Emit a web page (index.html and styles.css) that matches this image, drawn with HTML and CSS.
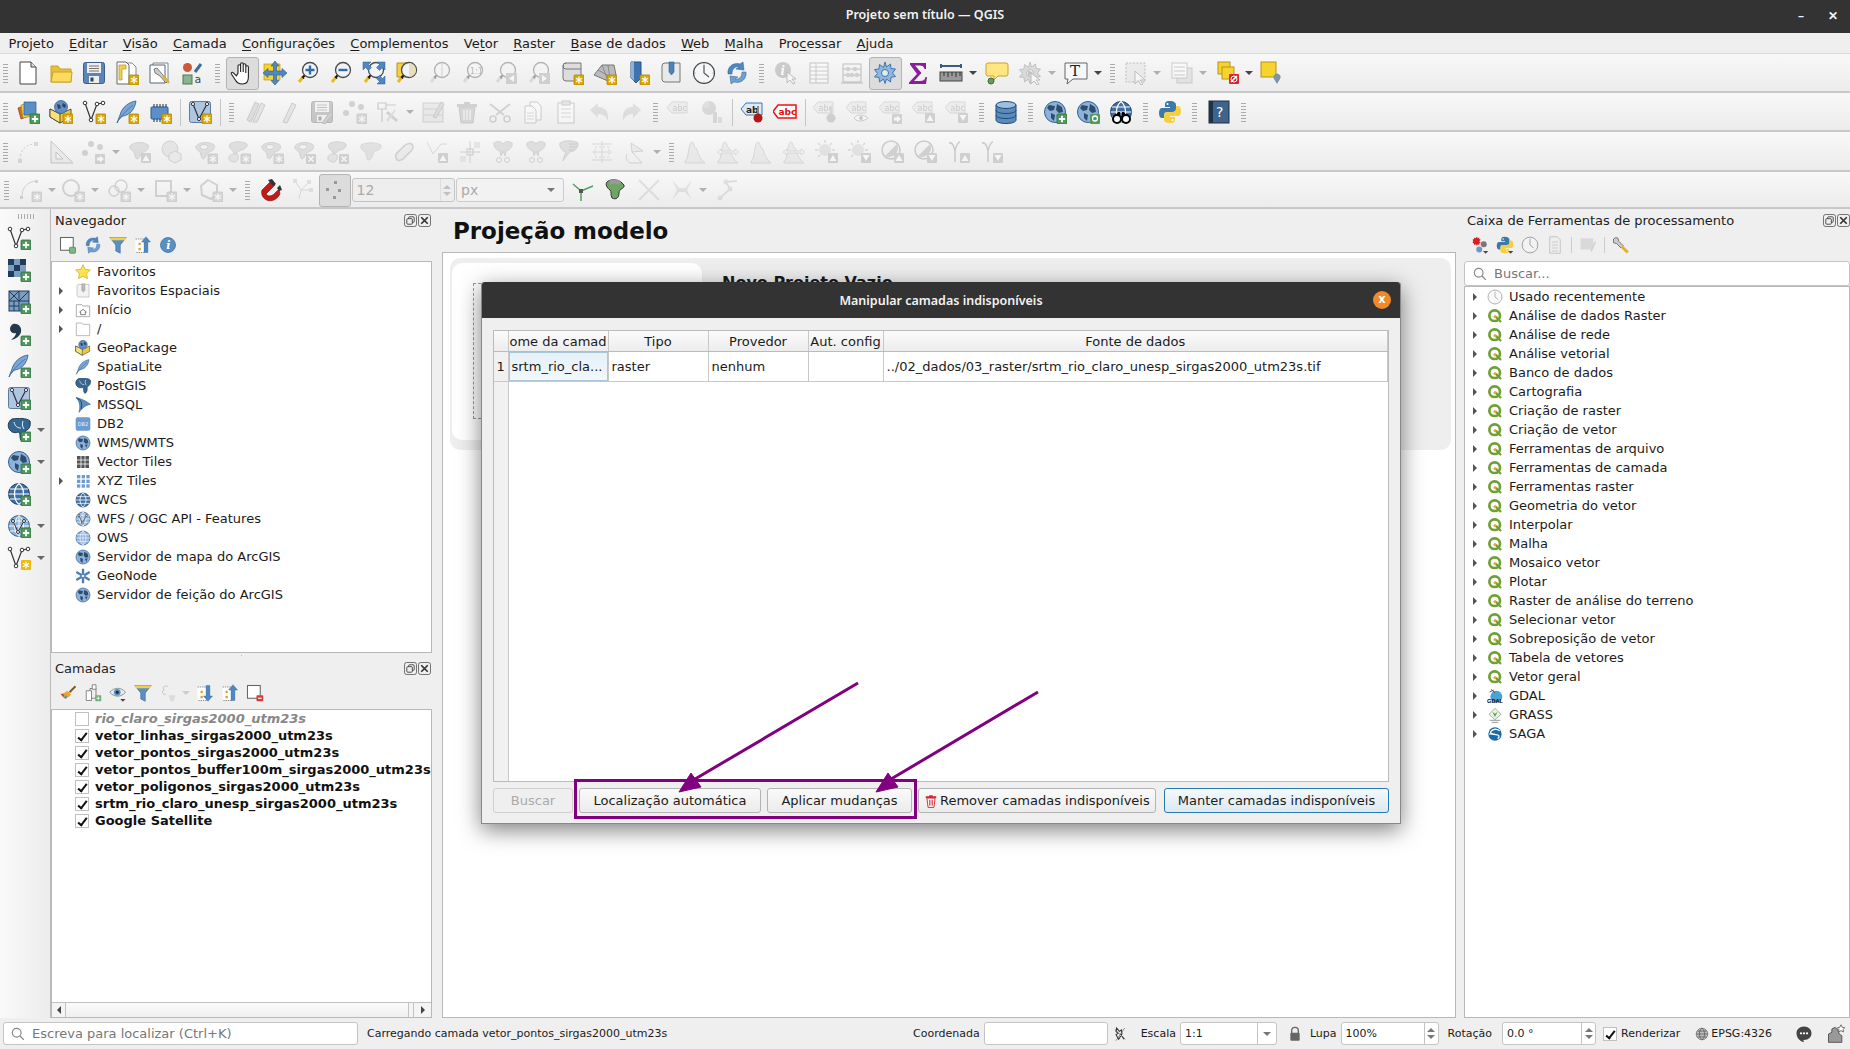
FILE: index.html
```html
<!DOCTYPE html>
<html lang="pt">
<head>
    <meta charset="UTF-8">
    <title>Projeto sem título — QGIS</title>
    <link rel="stylesheet" href="styles.css">
</head>
<body>

<!-- icon library -->
<svg class="defs" xmlns="http://www.w3.org/2000/svg">
    <symbol id="bstar" viewBox="0 0 24 24"><rect x="14" y="14" width="10" height="10" rx="1" fill="#dba90a" stroke="#a98300" stroke-width=".8"/><path d="M19 15.5v7M16 17.2l6 3.6M22 17.2l-6 3.6" stroke="#fff" stroke-width="1.3" fill="none"/></symbol>
    <symbol id="bplus" viewBox="0 0 24 24"><rect x="14" y="14" width="10" height="10" rx="1" fill="#4f9a5c" stroke="#2e6b3a" stroke-width=".8"/><path d="M19 15.8v6.4M15.8 19h6.4" stroke="#fff" stroke-width="1.8" fill="none"/></symbol>
    <symbol id="bx" viewBox="0 0 24 24"><rect x="13" y="14" width="10" height="10" rx="1" fill="#999"/><path d="M15.5 16.5l5 5M20.5 16.5l-5 5" stroke="#fff" stroke-width="1.6"/></symbol>
    <symbol id="barrow" viewBox="0 0 24 24"><rect x="13" y="14" width="10" height="10" rx="1" fill="#999"/><path d="M15 17.5h3v-2l4 3.5-4 3.5v-2h-3z" fill="#fff"/></symbol>
    <symbol id="bup" viewBox="0 0 24 24"><rect x="13" y="13" width="10" height="10" rx="1" fill="#999"/><path d="M18 15l3.5 6h-7z" fill="#fff"/></symbol>
    <symbol id="bdown" viewBox="0 0 24 24"><rect x="13" y="13" width="10" height="10" rx="1" fill="#999"/><path d="M18 21l3.5-6h-7z" fill="#fff"/></symbol>

    <symbol id="new" viewBox="0 0 24 24"><path d="M4 1h11l5 5v17H4z" fill="#fff" stroke="#444"/><path d="M15 1v5h5" fill="#ddd" stroke="#444"/></symbol>
    <symbol id="open" viewBox="0 0 24 24"><path d="M2 21V5h7l2 3h11v13z" fill="#e9bf3a" stroke="#c9a227"/><path d="M2 21l2-10h19l-1 10z" fill="#fbdb5e" stroke="#c9a227"/></symbol>
    <symbol id="save" viewBox="0 0 24 24"><rect x="1.5" y="1.5" width="21" height="21" rx="2" fill="#5b85b8" stroke="#3a5f8a"/><rect x="5" y="2" width="14" height="10" fill="#eee"/><path d="M7 5h10M7 7.500h10M7 10h10" stroke="#777"/><rect x="7" y="15" width="10" height="7" fill="#eee"/><rect x="8.500" y="16.500" width="3" height="4" fill="#345"/></symbol>
    <symbol id="layout" viewBox="0 0 24 24"><path d="M7 2h10l4 4v15H7z" fill="#fff" stroke="#888"/><path d="M2 1h9l3 3v19H2z" fill="#fff" stroke="#666"/><path d="M4 4h7v4H7v11H4z" fill="#f3cf4d" stroke="#b69419" stroke-width=".7"/><use href="#bstar"/></symbol>
    <symbol id="report" viewBox="0 0 24 24"><path d="M5 2h15v18H5z" fill="#fff" stroke="#789"/><path d="M2 4h15v18H2z" fill="#fff" stroke="#567"/><path d="M6 8l3-1 5 6 6 7-2 2-6-7-5-3z" fill="#ccc" stroke="#555" stroke-width=".7"/><path d="M15 15l6 7" stroke="#e0b030" stroke-width="2.4"/></symbol>
    <symbol id="legend" viewBox="0 0 24 24"><circle cx="6.500" cy="6.500" r="4.500" fill="#c9593a"/><path d="M14 11l6-8" stroke="#3d6d9e" stroke-width="3"/><rect x="2" y="14" width="9" height="9" fill="#8cb38f" stroke="#4b7a50"/><text x="13.500" y="22" font-family="DejaVu Sans" font-size="11" fill="#444">a</text></symbol>
    <symbol id="hand" viewBox="0 0 24 24"><path d="M8 12V5a1.300 1.300 0 0 1 2.600 0v6V3a1.300 1.300 0 0 1 2.600 0v8V4a1.300 1.300 0 0 1 2.600 0v8V6a1.300 1.300 0 0 1 2.600 0v10c0 4-2 7-6 7s-6-2-7-4l-4-6c-.8-1.400 1-2.400 2-1.200l3 3z" fill="#fff" stroke="#222" stroke-width="1.100"/></symbol>
    <symbol id="panto" viewBox="0 0 24 24"><rect x="1" y="3" width="16" height="16" fill="#f6d32d" stroke="#a78f10" stroke-width=".6"/><path d="M12 0l4 5h-2.500v5H19V7.500l5 4.500-5 4.500V14h-5.500v5.500H16l-4 4.500-4-4.500h2.500V14H5v2.500L0 12l5-4.500V10h5.500V5H8z" fill="#4f87c0" stroke="#2a5d90" stroke-width=".6"/></symbol>
    <symbol id="glass" viewBox="0 0 24 24"><circle cx="14" cy="9" r="7.500" fill="#f1f4f6" stroke="#4b4b4b" stroke-width="1.300"/><path d="M8.500 14.500l-1.500 1.500" stroke="#111" stroke-width="2"/><path d="M7 16l-4 5" stroke="#e8b923" stroke-width="3"/><path d="M7.500 16l-1 1" stroke="#111" stroke-width="3"/></symbol>
    <symbol id="zoomin" viewBox="0 0 24 24"><use href="#glass"/><path d="M14 4.500v9M9.500 9h9" stroke="#2f6cab" stroke-width="2.400"/></symbol>
    <symbol id="zoomout" viewBox="0 0 24 24"><use href="#glass"/><path d="M9.500 9h9" stroke="#2f6cab" stroke-width="2.400"/></symbol>
    <symbol id="zoomfull" viewBox="0 0 24 24"><use href="#glass"/><path d="M1 1h8L6.500 3.500l3 3-3 3-3-3L1 9zM23 1v8l-2.500-2.500-3 3-3-3 3-3L15 1zM23 23h-8l2.500-2.500-3-3 3-3 3 3L23 15z" fill="#4f87c0" stroke="#2a5d90" stroke-width=".5"/></symbol>
    <symbol id="zoomsel" viewBox="0 0 24 24"><path d="M2 2h13v14H2z" fill="#f3cf4d" stroke="#b69419"/><use href="#glass"/><path d="M14 2a7 7 0 0 1 0 14z" fill="#e7dfb8"/></symbol>
    <symbol id="zoomlayer" viewBox="0 0 24 24"><use href="#glass"/><path d="M14 2v14" stroke="#999"/></symbol>
    <symbol id="zoomone" viewBox="0 0 24 24"><use href="#glass"/><text x="9" y="12.500" font-family="DejaVu Sans" font-size="8" fill="#555">1:1</text></symbol>
    <symbol id="zoomprev" viewBox="0 0 24 24"><use href="#glass"/><rect x="12" y="12" width="11" height="11" fill="#999"/><path d="M20 14l-5 3.500 5 3.500z" fill="#fff"/></symbol>
    <symbol id="zoomnext" viewBox="0 0 24 24"><use href="#glass"/><rect x="12" y="12" width="11" height="11" fill="#999"/><path d="M15 14l5 3.500-5 3.500z" fill="#fff"/></symbol>
    <symbol id="theme" viewBox="0 0 24 24"><path d="M6 2h15v18H6a3 3 0 0 1-3-3V5a3 3 0 0 1 3-3z" fill="#ddd" stroke="#777"/><path d="M6 2a3 3 0 0 0 0 6h15" fill="none" stroke="#777"/><use href="#bstar"/></symbol>
    <symbol id="tile" viewBox="0 0 24 24"><path d="M1 14L9 4h12l2 10-8 6z" fill="#bbb" stroke="#777"/><path d="M5 9l13 7M9 4l6 16M15 4l2 14" stroke="#777" stroke-width=".7"/><use href="#bstar"/></symbol>
    <symbol id="bookmark" viewBox="0 0 24 24"><path d="M5 1h10v16l-5 5-5-5z" fill="#3d74ad" stroke="#275181"/><path d="M5 1h3v19l-3-3z" fill="#8fb1d6"/><use href="#bstar"/></symbol>
    <symbol id="bookmarks" viewBox="0 0 24 24"><path d="M6 2h15v19H6a3 3 0 0 1-3-3V5a3 3 0 0 1 3-3z" fill="#e9e9e9" stroke="#777"/><path d="M10 1h5v10l-2.500 3-2.500-3z" fill="#4c83bd" stroke="#2f5f92" stroke-width=".6"/></symbol>
    <symbol id="clock" viewBox="0 0 24 24"><circle cx="12" cy="12" r="10.500" fill="#f4f6f8" stroke="#444" stroke-width="1.100"/><path d="M12 4v8l5 4" fill="none" stroke="#555" stroke-width="1.200"/><path d="M12 2v1.500M12 20.500V22M2 12h1.500M20.500 12H22" stroke="#999"/></symbol>
    <symbol id="refresh" viewBox="0 0 24 24"><path d="M3 13C2 6 8 1 15 3l3-2 1 8-8-1 3-2C10 5 7 8 7 13z" fill="#4f87c0" stroke="#2a5d90" stroke-width=".5"/><path d="M21 11c1 7-5 12-12 10l-3 2-1-8 8 1-3 2c4 1 7-2 7-7z" fill="#6fa0d2" stroke="#2a5d90" stroke-width=".5"/></symbol>
    <symbol id="info" viewBox="0 0 24 24"><circle cx="9" cy="9" r="8" fill="#5a8fc3"/><text x="6.500" y="13.500" font-family="DejaVu Serif" font-size="12" font-style="italic" font-weight="bold" fill="#fff">i</text><path d="M13 11v11l3-3 3 4 2-1-3-4h4z" fill="#fff" stroke="#666"/></symbol>
    <symbol id="tablei" viewBox="0 0 24 24"><rect x="3" y="2" width="18" height="20" fill="#fff" stroke="#777"/><path d="M3 6h18M3 10h18M3 14h18M3 18h18M9 2v20" stroke="#888"/></symbol>
    <symbol id="abacus" viewBox="0 0 24 24"><rect x="3" y="3" width="18" height="18" fill="none" stroke="#666"/><path d="M3 8h18M3 14h18M1 22h22" stroke="#666"/><circle cx="8" cy="8" r="2.200" fill="#999"/><circle cx="15" cy="8" r="2.200" fill="#999"/><circle cx="8" cy="14" r="2.200" fill="#999"/><circle cx="12" cy="14" r="2.200" fill="#999"/><circle cx="17" cy="14" r="2.200" fill="#999"/></symbol>
    <symbol id="gear" viewBox="0 0 24 24"><path d="M12 1l1.500 5 4-3 .5 4.500 4.500.5-3 4 3 3.500-4.500.8-.5 4.700-4-3-1.500 4.500-1.500-4.500-4 3-.5-4.700L1.500 16l3-3.500-3-4L6 8l.5-4.500 4 3z" fill="#8fb6dd" stroke="#3f76ad"/><circle cx="12" cy="12" r="3.500" fill="#e9e9e9" stroke="#3f76ad"/></symbol>
    <symbol id="sigma" viewBox="0 0 24 24"><path d="M4 2h16v6h-1.500c-.5-2.500-2-3.500-5-3.500H9l6.500 7.500L8 20h6c3 0 5-1 5.500-4H21l-1 7H3v-1.500L11 13 4 3.500z" fill="#8a1d9a"/></symbol>
    <symbol id="ruler" viewBox="0 0 24 24"><path d="M2 5h20M2 3v4M22 3v4" stroke="#3c5a7c" stroke-width="2" fill="none"/><rect x="1" y="11" width="22" height="9" fill="#999" stroke="#444"/><path d="M5 11v4M9 11v5M13 11v4M17 11v5M21 11v4" stroke="#333"/></symbol>
    <symbol id="tip" viewBox="0 0 24 24"><path d="M3 2h18a2 2 0 0 1 2 2v9a2 2 0 0 1-2 2h-8l-4 4v-4H3a2 2 0 0 1-2-2V4a2 2 0 0 1 2-2z" fill="#ffe680" stroke="#c9a227"/><circle cx="6" cy="20" r="3" fill="#6c9a5a" stroke="#3f6a3a"/></symbol>
    <symbol id="gearplay" viewBox="0 0 24 24"><use href="#gear"/><path d="M10 9l5 3-5 3z" fill="#777"/><path d="M13 12v11l3-3 3 4 2-1-3-4h4z" fill="#fff" stroke="#666"/></symbol>
    <symbol id="tbox" viewBox="0 0 24 24"><path d="M1 2h22v16H9l-6 5 1-5H1z" fill="#f5f7f9" stroke="#666"/><text x="6" y="15" font-family="DejaVu Serif" font-size="15" fill="#222">T</text></symbol>
    <symbol id="selbox" viewBox="0 0 24 24"><rect x="2" y="2" width="19" height="19" fill="#ddd" stroke="#666" stroke-dasharray="2 1.500"/><path d="M11 10v13l3-3.500 3 4.500 2-1-3-4h5z" fill="#fff" stroke="#666"/></symbol>
    <symbol id="form" viewBox="0 0 24 24"><rect x="7" y="7" width="15" height="15" fill="#ccc" stroke="#888"/><rect x="2" y="2" width="15" height="15" fill="#fff" stroke="#888"/><path d="M4 6h11M4 10h11M4 14h11" stroke="#888"/></symbol>
    <symbol id="deselect" viewBox="0 0 24 24"><rect x="2" y="1" width="12" height="12" fill="#f6d32d" stroke="#b69419"/><rect x="6" y="6" width="12" height="12" fill="#f6d32d" stroke="#b69419"/><rect x="13" y="13" width="10" height="10" rx="1" fill="#d9262c"/><path d="M15 21l6-6" stroke="#fff" stroke-width="1.600"/><circle cx="18" cy="18" r="3" fill="none" stroke="#fff"/></symbol>
    <symbol id="selpin" viewBox="0 0 24 24"><rect x="2" y="1" width="15" height="15" fill="#f6d32d" stroke="#b69419"/><path d="M18 23l-3-5a3.500 3.500 0 1 1 6 0z" fill="#7d93a8"/></symbol>

    <symbol id="layers" viewBox="0 0 24 24"><path d="M2 8l8-3 3 11-8 3z" fill="#d26a2a" stroke="#8a4113" stroke-width=".7"/><path d="M5 5l9-2 2 13-9 2z" fill="#f3cf4d" stroke="#a78f10" stroke-width=".7"/><path d="M8 2h12v13H8z" fill="#5a8fc3" stroke="#2a5d90" stroke-width=".7"/><use href="#bplus"/></symbol>
    <symbol id="gpkg" viewBox="0 0 24 24"><path d="M1 9l10 5 11-5v8l-11 6-10-6z" fill="#eec93e" stroke="#333" stroke-width=".8"/><path d="M1 9l10 5v9l-10-6z" fill="#f8e278" stroke="#333" stroke-width=".8"/><circle cx="12" cy="7" r="6.500" fill="#5f8fc4" stroke="#2a5d90" stroke-width=".7"/><path d="M8 4l3 1 1 3-3 1zM14 3l3 2-1 3-3-2z" fill="#345"/></symbol>
    <symbol id="gpkgb" viewBox="0 0 24 24"><use href="#gpkg"/><use href="#bstar"/></symbol>
    <symbol id="vline" viewBox="0 0 24 24"><path d="M3 3l6 17 6-16 6-1" fill="none" stroke="#333" stroke-width="1.200"/><g fill="#fff" stroke="#333"><circle cx="3" cy="3" r="1.800"/><circle cx="9" cy="20" r="1.800"/><circle cx="15" cy="4" r="1.800"/><circle cx="21" cy="3" r="1.800"/></g></symbol>
    <symbol id="vlinestar" viewBox="0 0 24 24"><use href="#vline"/><use href="#bstar"/></symbol>
    <symbol id="vlineplus" viewBox="0 0 24 24"><use href="#vline"/><use href="#bplus"/></symbol>
    <symbol id="feather" viewBox="0 0 24 24"><path d="M21 1C14 2 7 7 5 15l-3 8c2-4 4-6 6-7 7-1 12-7 13-15z" fill="#7ba6d4" stroke="#2d5c90" stroke-width=".8"/><path d="M4 19c5-6 9-10 14-14" stroke="#2d5c90" stroke-width=".6" fill="none"/></symbol>
    <symbol id="featherstar" viewBox="0 0 24 24"><use href="#feather"/><use href="#bstar"/></symbol>
    <symbol id="featherplus" viewBox="0 0 24 24"><use href="#feather"/><use href="#bplus"/></symbol>
    <symbol id="chip" viewBox="0 0 24 24"><rect x="3" y="7" width="17" height="12" rx="1" fill="#5b8fcb" stroke="#2a5d90"/><path d="M6 4v3M9 4v3M12 4v3M15 4v3M18 4v3M6 19v3M9 19v3M12 19v3" stroke="#223"/><use href="#bstar"/></symbol>
    <symbol id="meshv" viewBox="0 0 24 24"><rect x="1.500" y="1.500" width="21" height="21" rx="2" fill="#aec6df" stroke="#5a7c9f"/><path d="M5 4l6 15 8-15" fill="none" stroke="#334" stroke-width="1.200"/><g fill="#fff" stroke="#334"><circle cx="5" cy="4" r="1.600"/><circle cx="11" cy="19" r="1.600"/><circle cx="19" cy="4" r="1.600"/></g></symbol>
    <symbol id="meshstar" viewBox="0 0 24 24"><use href="#meshv"/><use href="#bstar"/></symbol>
    <symbol id="meshplus" viewBox="0 0 24 24"><use href="#meshv"/><use href="#bplus"/></symbol>
    <symbol id="pencils" viewBox="0 0 24 24"><path d="M3 20L11 2l4 2-8 18z" fill="#bbb" stroke="#888"/><path d="M9 22L17 3l4 2-8 17z" fill="#ccc" stroke="#888"/></symbol>
    <symbol id="pencil" viewBox="0 0 24 24"><path d="M6 22L15 3l4 2-9 18z" fill="#ccc" stroke="#888"/></symbol>
    <symbol id="savepen" viewBox="0 0 24 24"><use href="#save"/><path d="M12 23l8-11 3 2-8 10z" fill="#999" stroke="#666"/></symbol>
    <symbol id="pts" viewBox="0 0 24 24"><circle cx="9" cy="4" r="3" fill="#999"/><circle cx="18" cy="7" r="3" fill="#999"/><circle cx="3" cy="13" r="3" fill="#999"/></symbol>
    <symbol id="ptsstar" viewBox="0 0 24 24"><use href="#pts"/><use href="#bstar"/></symbol>
    <symbol id="ptsarrow" viewBox="0 0 24 24"><use href="#pts"/><use href="#barrow"/></symbol>
    <symbol id="tools" viewBox="0 0 24 24"><path d="M2 3h8v6H2zM6 9v13M10 5h10" fill="none" stroke="#888" stroke-width="1.200"/><path d="M10 13l10 9 2-2-10-9z" fill="#999"/><path d="M20 10l-8 12-2-2 9-11z" fill="#bbb"/></symbol>
    <symbol id="attr" viewBox="0 0 24 24"><rect x="1" y="3" width="20" height="19" fill="#ddd9c8" stroke="#999"/><path d="M1 9h20M1 15h20" stroke="#999"/><path d="M11 17l8-15 3 2-8 14z" fill="#bbb" stroke="#888"/></symbol>
    <symbol id="trash" viewBox="0 0 24 24"><path d="M4 7h16l-2 16H6z" fill="#aaa" stroke="#888"/><path d="M2 4h20v3H2zM9 2h6v2H9z" fill="#999"/><path d="M9 10v10M12 10v10M15 10v10" stroke="#eee" stroke-width="1.300"/></symbol>
    <symbol id="trashred" viewBox="0 0 24 24"><path d="M5 7h14l-2 16H7z" fill="#fff" stroke="#d3262c" stroke-width="1.600"/><path d="M3 4h18v3H3zM9 2h6v2H9z" fill="#d3262c"/><path d="M9.500 10v10M12 10v10M14.500 10v10" stroke="#d3262c" stroke-width="1.300"/></symbol>
    <symbol id="cut" viewBox="0 0 24 24"><path d="M2 4l14 11M22 4L8 15" stroke="#999" stroke-width="2"/><circle cx="5" cy="19" r="3" fill="none" stroke="#999" stroke-width="1.500"/><circle cx="19" cy="19" r="3" fill="none" stroke="#999" stroke-width="1.500"/></symbol>
    <symbol id="copy" viewBox="0 0 24 24"><path d="M9 2h7l4 4v14H9z" fill="#fff" stroke="#888"/><path d="M4 6h7l4 4v13H4z" fill="#fff" stroke="#888"/><path d="M6 13h7M6 16h7M6 19h7" stroke="#aaa"/></symbol>
    <symbol id="paste" viewBox="0 0 24 24"><rect x="4" y="3" width="16" height="20" fill="#fff" stroke="#888"/><rect x="8" y="1" width="8" height="4" fill="#ccc" stroke="#888"/><path d="M7 9h10M7 13h10M7 17h10" stroke="#aaa"/></symbol>
    <symbol id="undo" viewBox="0 0 24 24"><path d="M3 10l8-7v4c7 0 11 4 10 14-2-5-5-7-10-7v4z" fill="#bbb"/></symbol>
    <symbol id="redo" viewBox="0 0 24 24"><path d="M21 10l-8-7v4C6 7 2 11 3 21c2-5 5-7 10-7v4z" fill="#bbb"/></symbol>
    <symbol id="diagram" viewBox="0 0 24 24"><path d="M9 1a7 7 0 1 1-7 7z" fill="#aaa"/><path d="M2 8a7 7 0 0 1 7-7v7z" fill="#c4bdb0"/><rect x="13" y="12" width="4" height="11" fill="#aaa"/><rect x="18" y="17" width="4" height="6" fill="#bbb"/></symbol>
    <symbol id="abpin" viewBox="0 0 24 24"><path d="M6 3h16v12H6L1 9z" fill="#dce9f6" stroke="#3a77b5"/><text x="6" y="12.500" font-family="DejaVu Sans" font-size="9" font-weight="bold" fill="#222">ab</text><path d="M18 6v10" stroke="#888" stroke-width="2"/><circle cx="18" cy="18" r="4.500" fill="#b01818"/></symbol>
    <symbol id="abcred" viewBox="0 0 24 24"><path d="M5 5h18v13H5L0 11.500z" fill="#fff" stroke="#e11" stroke-width="1.500"/><text x="5.500" y="15" font-family="DejaVu Sans" font-size="9" font-weight="bold" fill="#d11">abc</text></symbol>
    <symbol id="abgrey" viewBox="0 0 24 24"><path d="M5 2h15v11H5L0 7.500z" fill="#e4e0d2" stroke="#aaa"/><text x="5.500" y="11" font-family="DejaVu Sans" font-size="8" fill="#888">abc</text></symbol>
    <symbol id="abbad" viewBox="0 0 24 24"><use href="#abgrey"/><path d="M18 6v10" stroke="#aaa" stroke-width="2"/><circle cx="18" cy="18" r="4.500" fill="#999"/></symbol>
    <symbol id="abeye" viewBox="0 0 24 24"><use href="#abgrey"/><path d="M8 18c3-4 9-4 14 0-5 4-11 4-14 0z" fill="#fff" stroke="#888"/><circle cx="15" cy="18" r="2" fill="#888"/></symbol>
    <symbol id="abmove" viewBox="0 0 24 24"><use href="#abgrey"/><use href="#barrow"/></symbol>
    <symbol id="abrot" viewBox="0 0 24 24"><use href="#abgrey"/><use href="#bup"/></symbol>
    <symbol id="abedit" viewBox="0 0 24 24"><use href="#abgrey"/><use href="#bdown"/></symbol>
    <symbol id="db" viewBox="0 0 24 24"><path d="M2 5v15c0 2 4 3.500 10 3.500s10-1.500 10-3.500V5z" fill="#5b8bbd" stroke="#1f4b78"/><ellipse cx="12" cy="5" rx="10" ry="3.500" fill="#9cc0e0" stroke="#1f4b78"/><path d="M2 10c0 2 4 3.500 10 3.500S22 12 22 10M2 15c0 2 4 3.500 10 3.500S22 17 22 15" fill="none" stroke="#1f4b78"/></symbol>
    <symbol id="globe" viewBox="0 0 24 24"><circle cx="12" cy="12" r="10.500" fill="#8cb2dc" stroke="#2f5f92"/><path d="M12 1.500c-6 5-6 16 0 21M12 1.500c6 5 6 16 0 21M1.500 12h21M3 7h18M3 17h18M12 1.500v21" fill="none" stroke="#fff" stroke-width=".9"/></symbol>
    <symbol id="globedark" viewBox="0 0 24 24"><circle cx="12" cy="12" r="10.500" fill="#3f6ea3" stroke="#1e3f66"/><path d="M12 1.500c-6 5-6 16 0 21M12 1.500c6 5 6 16 0 21M1.500 12h21M3 7h18M3 17h18" fill="none" stroke="#fff" stroke-width="1.200"/></symbol>
    <symbol id="globeland" viewBox="0 0 24 24"><circle cx="12" cy="12" r="10.500" fill="#8cb2dc" stroke="#2f5f92"/><path d="M6 5l6 1-1 4-4 1-3-3zM14 4l5 3 1 5-4 1-3-3zM8 13l4 2-1 6-3-3zM15 15l4-1-2 5z" fill="#2e4c6b"/></symbol>
    <symbol id="globev" viewBox="0 0 24 24"><use href="#globe"/><path d="M6 7l5 11 6-11" fill="none" stroke="#333"/><g fill="#fff" stroke="#333"><circle cx="6" cy="7" r="1.500"/><circle cx="11" cy="18" r="1.500"/><circle cx="17" cy="7" r="1.500"/></g></symbol>
    <symbol id="globeplus" viewBox="0 0 24 24"><use href="#globeland"/><use href="#bplus"/></symbol>
    <symbol id="globedarkplus" viewBox="0 0 24 24"><use href="#globedark"/><use href="#bplus"/></symbol>
    <symbol id="globevplus" viewBox="0 0 24 24"><use href="#globev"/><use href="#bplus"/></symbol>
    <symbol id="globeq" viewBox="0 0 24 24"><use href="#globeland"/><rect x="14" y="14" width="10" height="10" rx="1" fill="#4f9a5c"/><circle cx="19" cy="18.500" r="2.500" fill="none" stroke="#fff" stroke-width="1.300"/></symbol>
    <symbol id="globebin" viewBox="0 0 24 24"><use href="#globedark"/><circle cx="8" cy="19" r="4" fill="#fff" stroke="#000" stroke-width="2"/><circle cx="17" cy="19" r="4" fill="#fff" stroke="#000" stroke-width="2"/><path d="M6 16l3-4h2v5h2v-5h2l3 4z" fill="#000"/></symbol>
    <symbol id="python" viewBox="0 0 24 24"><path d="M12 1c-5 0-5 2-5 4v2h5v1H4c-2 0-3 2-3 5s1 5 3 5h2v-3c0-2 2-3 4-3h5c2 0 3-1 3-3V5c0-2-2-4-6-4z" fill="#3d78ab"/><path d="M12 23c5 0 5-2 5-4v-2h-5v-1h8c2 0 3-2 3-5s-1-5-3-5h-2v3c0 2-2 3-4 3H9c-2 0-3 1-3 3v5c0 2 2 3 6 3z" fill="#f6cf3e"/><circle cx="9.500" cy="4" r="1" fill="#fff"/><circle cx="14.500" cy="20" r="1" fill="#fff"/></symbol>
    <symbol id="help" viewBox="0 0 24 24"><rect x="2" y="1" width="20" height="22" fill="#3f6489" stroke="#1c2e44"/><rect x="2" y="1" width="4" height="22" fill="#1f3347"/><text x="9" y="17" font-family="DejaVu Sans" font-size="14" fill="#fff">?</text></symbol>

    <symbol id="dotpath" viewBox="0 0 24 24"><path d="M4 20C4 10 10 4 19 4" fill="none" stroke="#888" stroke-dasharray="2 2"/><rect x="2" y="19" width="4" height="4" fill="#aaa"/><rect x="18" y="2" width="4" height="4" fill="#aaa"/></symbol>
    <symbol id="square-ruler" viewBox="0 0 24 24"><path d="M2 1v22h22z" fill="#ddd" stroke="#777"/><path d="M7 12v7h7z" fill="#f0f0f0" stroke="#777"/></symbol>
    <symbol id="blob" viewBox="0 0 24 24"><path d="M2 6c3-4 13-5 18-1 2 3-1 6-5 7-3 2-3 6-6 7-3-1-1-6-4-8-2-1-4-3-3-5z" fill="#bbb" stroke="#999"/></symbol>
    <symbol id="blobrot" viewBox="0 0 24 24"><use href="#blob"/><use href="#bup"/></symbol>
    <symbol id="hexring" viewBox="0 0 24 24"><circle cx="9" cy="9" r="8" fill="#ccc" stroke="#999"/><path d="M14 11l6 3v6l-6 3-6-3v-6z" fill="#ddd" stroke="#999"/></symbol>
    <symbol id="ring" viewBox="0 0 24 24"><use href="#blob"/><ellipse cx="10" cy="7" rx="4" ry="2.500" fill="#eee" stroke="#999"/></symbol>
    <symbol id="ringstar" viewBox="0 0 24 24"><use href="#ring"/><use href="#bstar"/></symbol>
    <symbol id="ringx" viewBox="0 0 24 24"><use href="#ring"/><use href="#bx"/></symbol>
    <symbol id="twoblob" viewBox="0 0 24 24"><path d="M3 4c4-3 12-3 17 0 1 3-3 6-6 6-3 1-4 4-6 4-2-1-2-4-4-5-2-1-2-3-1-5z" fill="#bbb" stroke="#999"/><path d="M2 17c1-3 6-4 9-2 1 2 0 6-3 7-4 0-7-2-6-5z" fill="#ccc" stroke="#999"/></symbol>
    <symbol id="twostar" viewBox="0 0 24 24"><use href="#twoblob"/><use href="#bstar"/></symbol>
    <symbol id="twox" viewBox="0 0 24 24"><use href="#twoblob"/><use href="#bx"/></symbol>
    <symbol id="reshape" viewBox="0 0 24 24"><path d="M2 5c6-3 14-3 20 0 1 4-3 6-7 6-1 4-2 9-6 9-2-1-1-6-3-8-2-1-5-3-4-7z" fill="#c4c4b4" stroke="#aaa"/></symbol>
    <symbol id="offset" viewBox="0 0 24 24"><path d="M4 18c-2-5 4-7 7-11 3-4 9-5 10-1 1 5-5 7-8 11-3 4-8 5-9 1z" fill="#ddd" stroke="#999" stroke-width="1.500"/></symbol>
    <symbol id="vrot" viewBox="0 0 24 24"><path d="M2 2l6 12 8-10h6" fill="none" stroke="#aaa"/><use href="#bup"/></symbol>
    <symbol id="split" viewBox="0 0 24 24"><path d="M12 1v22M2 12h20" stroke="#999"/><rect x="9" y="9" width="6" height="6" fill="none" stroke="#888"/><rect x="16" y="2" width="6" height="6" fill="#ccc"/><rect x="2" y="16" width="6" height="6" fill="#ccc"/></symbol>
    <symbol id="scissor" viewBox="0 0 24 24"><path d="M3 3c3-2 7-2 9 1 2-3 6-3 9-1 1 3-2 7-6 8l-1 5-2-5-2 5-1-5C5 10 2 6 3 3z" fill="#bbb" stroke="#999"/><circle cx="8" cy="20" r="2.500" fill="none" stroke="#999"/><circle cx="16" cy="20" r="2.500" fill="none" stroke="#999"/></symbol>
    <symbol id="scissor2" viewBox="0 0 24 24"><path d="M3 3c4-3 14-3 18 0 1 4-3 8-8 9-3 3-5 6-7 9 1-4 2-7 3-9-4-1-7-5-6-9z" fill="#bbb" stroke="#999"/><path d="M12 4h8M12 7h8M12 10h6" stroke="#888"/></symbol>
    <symbol id="fillring" viewBox="0 0 24 24"><path d="M2 4h20M2 20h20M2 12h20M12 1v22" stroke="#aaa"/><path d="M5 7h14v10H5z" fill="none" stroke="#aaa" stroke-dasharray="2 2"/></symbol>
    <symbol id="rotpoint" viewBox="0 0 24 24"><path d="M8 3l12 8-11 1z" fill="#ddd" stroke="#999"/><path d="M4 14c-2 4 0 7 3 9h12L9 12" fill="none" stroke="#999"/></symbol>
    <symbol id="peak" viewBox="0 0 24 24"><path d="M2 23V21c4 0 3-19 7-19 2 0 2 6 4 6 2 2 2 10 9 15z" fill="#d8dccf" stroke="#aaa"/></symbol>
    <symbol id="peakarrow" viewBox="0 0 24 24"><use href="#peak"/><path d="M1 12l4-3v2h14V9l4 3-4 3v-2H5v2z" fill="#eee" stroke="#999" stroke-width=".7"/></symbol>
    <symbol id="sun" viewBox="0 0 24 24"><circle cx="10" cy="10" r="6" fill="#ccc8a8"/><path d="M10 0v3M0 10h3M17 10h3M3 3l2 2M17 3l-2 2M3 17l2-2" stroke="#aaa" stroke-width="1.500"/></symbol>
    <symbol id="sunup" viewBox="0 0 24 24"><use href="#sun"/><use href="#bup"/></symbol>
    <symbol id="sundown" viewBox="0 0 24 24"><use href="#sun"/><use href="#bdown"/></symbol>
    <symbol id="contrast" viewBox="0 0 24 24"><circle cx="10" cy="10" r="9" fill="#eee" stroke="#888" stroke-width="1.500"/><path d="M4 16a9 9 0 0 0 12-12z" fill="#999"/></symbol>
    <symbol id="contup" viewBox="0 0 24 24"><use href="#contrast"/><use href="#bup"/></symbol>
    <symbol id="contdown" viewBox="0 0 24 24"><use href="#contrast"/><use href="#bdown"/></symbol>
    <symbol id="gamma" viewBox="0 0 24 24"><path d="M2 3c4-1 5 4 6 8 1-4 2-9 5-9M8 11v11" fill="none" stroke="#888" stroke-width="1.500"/></symbol>
    <symbol id="gammaup" viewBox="0 0 24 24"><use href="#gamma"/><use href="#bup"/></symbol>
    <symbol id="gammadown" viewBox="0 0 24 24"><use href="#gamma"/><use href="#bdown"/></symbol>

    <symbol id="curve" viewBox="0 0 24 24"><path d="M4 18C4 10 9 4 18 3" fill="none" stroke="#999"/><rect x="2" y="18" width="3" height="3" fill="#999"/><rect x="17" y="2" width="3" height="3" fill="#999"/><use href="#bstar"/></symbol>
    <symbol id="circ" viewBox="0 0 24 24"><circle cx="10" cy="10" r="8" fill="none" stroke="#999" stroke-width="2"/><use href="#bstar"/></symbol>
    <symbol id="ell" viewBox="0 0 24 24"><circle cx="7" cy="13" r="5" fill="none" stroke="#999" stroke-width="1.500"/><circle cx="14" cy="8" r="6" fill="none" stroke="#999" stroke-width="1.500"/><use href="#bstar"/></symbol>
    <symbol id="rectg" viewBox="0 0 24 24"><rect x="3" y="3" width="15" height="15" fill="none" stroke="#999" stroke-width="2"/><use href="#bstar"/></symbol>
    <symbol id="hexg" viewBox="0 0 24 24"><path d="M9 2l9 5v9l-6 5-9-4-1-9z" fill="none" stroke="#999" stroke-width="2"/><use href="#bstar"/></symbol>
    <symbol id="magnet" viewBox="0 0 24 24"><path d="M3 12l9-9 4 4-9 9c2 3 6 2 8 0l5-5 1 5c-3 6-10 9-15 5-3-2-4-6-3-9z" fill="#c11a1a" stroke="#7a0d0d" stroke-width=".6"/><path d="M9 2l4-1 4 5-3 2zM18 10l3-3 2 5-3 1z" fill="#333"/></symbol>
    <symbol id="snapadv" viewBox="0 0 24 24"><path d="M4 3l6 9-2 9M10 12l8-8M10 12h9" stroke="#aaa" fill="none"/><rect x="2" y="1" width="4" height="4" fill="#bbb"/><rect x="16" y="2" width="4" height="4" fill="#bbb"/><rect x="18" y="10" width="4" height="4" fill="#bbb"/></symbol>
    <symbol id="gridpts" viewBox="0 0 24 24"><rect x="11" y="3" width="3" height="3" fill="#999"/><rect x="3" y="10" width="3" height="3" fill="#999"/><rect x="15" y="11" width="3" height="3" fill="#999"/><rect x="10" y="18" width="3" height="3" fill="#999"/></symbol>
    <symbol id="ytrace" viewBox="0 0 24 24"><path d="M10 13L2 6M10 13l12-5M10 13v10" stroke="#4ea35b" stroke-width="1.500" fill="none"/><rect x="8" y="11" width="4" height="4" fill="#555"/></symbol>
    <symbol id="trace" viewBox="0 0 24 24"><path d="M3 4c3-3 10-3 14 0l3 3c1 4-5 3-5 8 0 5-3 7-7 5-2-4 0-6-2-8-3-2-5-6-3-8z" fill="#6fa562" stroke="#333"/><path d="M5 3c3-2 9-2 12 1l-2 3c-3-2-6-2-9 0z" fill="#999"/></symbol>
    <symbol id="xcross" viewBox="0 0 24 24"><path d="M2 2l20 20M22 2L2 22" stroke="#bbb" stroke-width="2"/></symbol>
    <symbol id="xmark" viewBox="0 0 24 24"><path d="M2 2l7 8 6 0 7-8-5 10 5 10-7-8-6 0-7 8 5-10z" fill="#c4c0b0"/></symbol>
    <symbol id="nodes" viewBox="0 0 24 24"><path d="M4 20l10-9-4-7 11-1" fill="none" stroke="#aaa" stroke-width="1.500"/><circle cx="4" cy="20" r="2.500" fill="#bbb"/><circle cx="14" cy="11" r="2.500" fill="#bbb"/><circle cx="10" cy="4" r="2.500" fill="#bbb"/></symbol>

    <symbol id="ds-new" viewBox="0 0 24 24"><rect x="2" y="2" width="17" height="17" fill="#fff" stroke="#666" stroke-width="1.400"/><rect x="14" y="15" width="8" height="8" rx="1" fill="#7db585" stroke="#4a8a55"/></symbol>
    <symbol id="ds-filter" viewBox="0 0 24 24"><path d="M1 2h22l-8 10v11l-6-3v-8z" fill="#5a8fc3" stroke="#2a5d90" stroke-width=".7"/><path d="M1 2h22l-2 3.500H3z" fill="#f3cf4d"/></symbol>
    <symbol id="ds-collapse" viewBox="0 0 24 24"><path d="M2 4h12v18H2" fill="#fff" stroke="#777" stroke-dasharray="2 1"/><rect x="6" y="9" width="3" height="3" fill="#e8992a"/><rect x="6" y="16" width="3" height="3" fill="#e8992a"/><path d="M16 1l6 7h-3.500v14h-5V8H10z" fill="#4f87c0" stroke="#2a5d90" stroke-width=".5"/></symbol>
    <symbol id="ds-expand" viewBox="0 0 24 24"><path d="M2 4h12v18H2" fill="#fff" stroke="#777" stroke-dasharray="2 1"/><rect x="6" y="9" width="3" height="3" fill="#e8992a"/><rect x="6" y="16" width="3" height="3" fill="#e8992a"/><path d="M16 23l6-7h-3.500V2h-5v14H10z" fill="#4f87c0" stroke="#2a5d90" stroke-width=".5"/></symbol>
    <symbol id="ds-info" viewBox="0 0 24 24"><circle cx="12" cy="12" r="10" fill="#5a8fc3" stroke="#3d6f9f"/><text x="9.500" y="17.500" font-family="DejaVu Serif" font-size="15" font-style="italic" font-weight="bold" fill="#fff">i</text></symbol>
    <symbol id="ds-brush" viewBox="0 0 24 24"><path d="M2 13c4 0 7-2 9-4l5 5c-2 3-5 5-8 5z" fill="#e8a92b"/><path d="M2 13l5 1-1 4z" fill="#d33"/><path d="M6 18l3-3 2 2-2 3z" fill="#5a8fc3"/><path d="M14 11l8-8" stroke="#7a5b2a" stroke-width="2.500"/></symbol>
    <symbol id="ds-group" viewBox="0 0 24 24"><path d="M8 6h8v13H8z" fill="#eee" stroke="#666"/><path d="M3 9h7v13H3z" fill="#fff" stroke="#666"/><path d="M11 1h5v6h-5z" fill="#fff" stroke="#666"/><rect x="15" y="15" width="8" height="8" rx="1" fill="#6fae7a"/><path d="M19 16.500v5M16.500 19h5" stroke="#fff"/></symbol>
    <symbol id="ds-eye" viewBox="0 0 24 24"><path d="M1 11c6-7 15-7 21 0-6 7-15 7-21 0z" fill="#e5ecf2" stroke="#777"/><circle cx="11" cy="11" r="4.500" fill="#5a8fc3"/><circle cx="11" cy="11" r="2" fill="#223"/><path d="M15 20h7l-3.500 3.500z" fill="#444"/></symbol>
    <symbol id="ds-expr" viewBox="0 0 24 24"><path d="M12 3C6 2 4 5 7 8c-4 1-3 6 2 6" fill="none" stroke="#999" stroke-width="1.300"/><path d="M13 15h9l-2 8h-5z" fill="#ccc"/></symbol>
    <symbol id="ds-remove" viewBox="0 0 24 24"><rect x="2" y="2" width="17" height="17" fill="#fff" stroke="#666" stroke-width="1.400"/><rect x="14" y="15" width="9" height="8" rx="1" fill="#d83a3a"/><path d="M16 19h5" stroke="#fff" stroke-width="1.500"/></symbol>
    <symbol id="ds-algo" viewBox="0 0 24 24"><path d="M8 1l1 2 2-1 0 2 2 1-2 2 2 2-2 1 0 2-2-1-1 2-2-2-2 1v-2l-2-1 1-2-1-2 2-1V2l2 1z" fill="#d42020"/><circle cx="17" cy="11" r="4" fill="#777"/><circle cx="11" cy="18" r="4" fill="#6d97c4"/><path d="M16 20h7l-3.500 3.500z" fill="#444"/></symbol>
    <symbol id="ds-pyc" viewBox="0 0 24 24"><use href="#python"/><path d="M16 20h7l-3.500 3.500z" fill="#444"/></symbol>
    <symbol id="ds-doc" viewBox="0 0 24 24"><path d="M5 1h10l4 4v18H5z" fill="#eee" stroke="#888"/><path d="M8 8h8M8 12h8M8 16h8M8 20h8" stroke="#999"/></symbol>
    <symbol id="ds-edit" viewBox="0 0 24 24"><path d="M2 3h17v15H2z" fill="#ccc8b8"/><path d="M15 20l6-13 2 1-6 13z" fill="#bbb"/></symbol>
    <symbol id="ds-wrench" viewBox="0 0 24 24"><path d="M2 4l3-2 3 1 1 4 6 6-3 3-6-6-4-1z" fill="#ccc" stroke="#555"/><path d="M13 14l8 8" stroke="#e2b12a" stroke-width="4"/></symbol>

    <symbol id="star" viewBox="0 0 24 24"><path d="M12 1l3.300 7 7.700 1-5.600 5.300L18.700 22 12 18.300 5.300 22l1.300-7.700L1 9l7.700-1z" fill="#ffe24d" stroke="#c9a227"/></symbol>
    <symbol id="home" viewBox="0 0 24 24"><path d="M2 4h8l2 2h10v16H2z" fill="#fff" stroke="#888"/><path d="M7 15l5-4 5 4h-1.500v4h-7v-4z" fill="#fff" stroke="#444"/></symbol>
    <symbol id="folder" viewBox="0 0 24 24"><path d="M2 3h8l2 2h10v17H2z" fill="#fff" stroke="#999"/></symbol>
    <symbol id="elephant" viewBox="0 0 24 24"><path d="M5 1c6-1 15-1 18 2 1 5-1 9-5 10 1 4 0 9-3 10-3-1-1-6-3-9-4 1-7 1-9-2C0 9 1 3 5 1z" fill="#336791" stroke="#1c3a55"/><path d="M7 4c1 4 3 6 7 6M16 3c-1 3-1 5 1 8" stroke="#fff" fill="none" stroke-width=".9"/></symbol>
    <symbol id="mssql" viewBox="0 0 24 24"><path d="M2 1c9 2 16 6 21 10-5 1-10 3-17 12 2-8 2-15-4-22z" fill="#5a8fc3" stroke="#2a5d90"/><path d="M2 1c6 2 10 8 7 17" fill="none" stroke="#123"/></symbol>
    <symbol id="db2" viewBox="0 0 24 24"><rect x="1" y="2" width="22" height="20" rx="3" fill="#6d9bd0"/><text x="12" y="15" text-anchor="middle" font-family="DejaVu Sans" font-size="7.500" fill="#e8f0f8">DB2</text></symbol>
    <symbol id="grid4" viewBox="0 0 24 24"><rect x="3" y="3" width="18" height="18" fill="#555"/><path d="M9 3v18M15 3v18M3 9h18M3 15h18" stroke="#fff" stroke-width="1.200"/></symbol>
    <symbol id="xyz" viewBox="0 0 24 24"><g fill="#6d9bd0"><rect x="3" y="3" width="5" height="5"/><rect x="10" y="3" width="5" height="5"/><rect x="17" y="3" width="5" height="5"/><rect x="3" y="10" width="5" height="5"/><rect x="10" y="10" width="5" height="5"/><rect x="17" y="10" width="5" height="5"/><rect x="3" y="17" width="5" height="5"/><rect x="10" y="17" width="5" height="5"/><rect x="17" y="17" width="5" height="5"/></g></symbol>
    <symbol id="geonode" viewBox="0 0 24 24"><path d="M12 1v22M2 6l20 12M22 6L2 18" stroke="#4a7fb5" stroke-width="3.500"/><circle cx="12" cy="12" r="2" fill="#eee"/></symbol>
    <symbol id="raster" viewBox="0 0 24 24"><rect x="1" y="1" width="18" height="18" fill="#7d9dbf"/><g fill="#1d3c5e"><rect x="1" y="1" width="6" height="6"/><rect x="13" y="1" width="6" height="6"/><rect x="7" y="7" width="6" height="6"/><rect x="1" y="13" width="6" height="6"/></g><use href="#bplus"/></symbol>
    <symbol id="mesh" viewBox="0 0 24 24"><rect x="2" y="1" width="20" height="20" fill="#7d9dbf" stroke="#1d3c5e"/><path d="M2 1l10 10M12 1L2 11M12 1v20M2 11h20M22 1L12 11M2 16h10M7 11v10" stroke="#1d3c5e" fill="none"/><use href="#bplus"/></symbol>
    <symbol id="comma" viewBox="0 0 24 24"><path d="M6 2c6-1 9 4 8 8-1 4-5 7-10 8 2-2 5-4 5-7-3 1-6-1-6-4 0-2 1-4 3-5z" fill="#24384e"/><use href="#bplus"/></symbol>
    <symbol id="elephantplus" viewBox="0 0 24 24"><use href="#elephant"/><use href="#bplus"/></symbol>
    <symbol id="vstaryellow" viewBox="0 0 24 24"><use href="#vline"/><rect x="14" y="14" width="10" height="10" rx="1" fill="#f0b90b"/><path d="M19 15.500v7M16 17.200l6 3.600M22 17.200l-6 3.600" stroke="#fff" stroke-width="1.200"/></symbol>

    <symbol id="qgis" viewBox="0 0 24 24"><circle cx="11.500" cy="11.500" r="8" fill="none" stroke="#6fa033" stroke-width="4"/><path d="M13 13l8 8" stroke="#6fa033" stroke-width="3.500"/><rect x="10" y="11" width="4" height="4" fill="#e8a23a" transform="rotate(45 12 13)"/></symbol>
    <symbol id="gdal" viewBox="0 0 24 24"><circle cx="14" cy="13" r="9" fill="#4aa3d8"/><path d="M6 2l6 5M4 6l6-3" stroke="#333" stroke-width="1.200"/><text x="0" y="23" font-family="Liberation Sans" font-size="8.500" font-weight="bold" fill="#000">GDAL</text></symbol>
    <symbol id="grass" viewBox="0 0 24 24"><path d="M12 2l9 9-9 8-9-8z" fill="#eef3e8" stroke="#888"/><path d="M8 7l4 8 4-8-4 3z" fill="#4caf35"/><path d="M4 20h16M7 23h10" stroke="#666"/></symbol>
    <symbol id="saga" viewBox="0 0 24 24"><circle cx="12" cy="12" r="10" fill="#1b6aa5"/><path d="M19 7c-4-3-10-3-13 1-2 3 2 5 7 5s7 3 3 6" fill="none" stroke="#fff" stroke-width="2"/><path d="M3 12h9" stroke="#fff" stroke-width="1.500"/></symbol>

    <symbol id="float" viewBox="0 0 14 14"><rect x=".5" y=".5" width="13" height="13" rx="2.500" fill="none" stroke="#666"/><rect x="5" y="3" width="6" height="6" fill="none" stroke="#444" rx="1"/><rect x="3" y="5" width="6" height="6" fill="#eee" stroke="#444" rx="1"/></symbol>
    <symbol id="close" viewBox="0 0 14 14"><rect x=".5" y=".5" width="13" height="13" rx="2.500" fill="none" stroke="#666"/><path d="M3.500 3.500l7 7M10.500 3.500l-7 7" stroke="#333" stroke-width="1.800"/></symbol>
    <symbol id="search" viewBox="0 0 16 16"><circle cx="6.500" cy="6.500" r="5" fill="none" stroke="#888" stroke-width="1.300"/><path d="M10.200 10.200l4.500 4.500" stroke="#888" stroke-width="1.500"/></symbol>
    <symbol id="nocoord" viewBox="0 0 24 24"><path d="M7 3l4 5 3-2 1 6-5 8-4-7 3-2-3-3zM13 12l5 8" fill="none" stroke="#333" stroke-width="1.600"/><path d="M4 5l16 15M19 3L6 22" stroke="#555"/></symbol>
    <symbol id="lock" viewBox="0 0 24 24"><path d="M7 11V7a5 5 0 0 1 10 0v4" fill="none" stroke="#666" stroke-width="2"/><rect x="5" y="10" width="14" height="12" rx="1.500" fill="#666"/></symbol>
    <symbol id="crs" viewBox="0 0 24 24"><circle cx="12" cy="12" r="10" fill="#bbb" stroke="#555"/><path d="M12 2c-6 5-6 15 0 20M12 2c6 5 6 15 0 20M2 12h20M4 7h16M4 17h16" fill="none" stroke="#444"/></symbol>
    <symbol id="chat" viewBox="0 0 24 24"><path d="M12 2c6 0 10 4 10 9s-4 9-10 9h-1l1 3c-5-1-10-6-10-12 0-5 4-9 10-9z" fill="#444"/><circle cx="8" cy="11" r="1.500" fill="#fff"/><circle cx="12" cy="11" r="1.500" fill="#fff"/><circle cx="16" cy="11" r="1.500" fill="#fff"/></symbol>
    <symbol id="plug" viewBox="0 0 24 24"><path d="M3 22V12l4-2V6l4-2 3 3 2 5 3 2v8z" fill="#999" stroke="#444"/><path d="M18 1l1.500 3 3 .5-2 2 .5 3-3-1.500-3 1.500.5-3-2-2 3-.5z" fill="#fff" stroke="#555"/></symbol>
</svg>

<div class="app">
    <header class="titlebar">Projeto sem título — QGIS
        <span class="win-btns"><span>–</span><span>✕</span></span>
    </header>

    <nav class="menubar">
        <span class="menu">Projeto</span>
        <span class="menu"><u>E</u>ditar</span>
        <span class="menu"><u>V</u>isão</span>
        <span class="menu"><u>C</u>amada</span>
        <span class="menu"><u>C</u>onfigurações</span>
        <span class="menu"><u>C</u>omplementos</span>
        <span class="menu">Ve<u>t</u>or</span>
        <span class="menu"><u>R</u>aster</span>
        <span class="menu"><u>B</u>ase de dados</span>
        <span class="menu"><u>W</u>eb</span>
        <span class="menu"><u>M</u>alha</span>
        <span class="menu">Pro<u>c</u>essar</span>
        <span class="menu"><u>A</u>juda</span>
    </nav>

    <div class="toolbar row-a">
        <span class="handle w-start"></span>
        <span class="t"><svg><use href="#new"/></svg></span>
        <span class="t"><svg><use href="#open"/></svg></span>
        <span class="t"><svg><use href="#save"/></svg></span>
        <span class="t"><svg><use href="#layout"/></svg></span>
        <span class="t"><svg><use href="#report"/></svg></span>
        <span class="t"><svg><use href="#legend"/></svg></span>
        <span class="handle"></span>
        <span class="t on"><svg><use href="#hand"/></svg></span>
        <span class="t"><svg><use href="#panto"/></svg></span>
        <span class="t"><svg><use href="#zoomin"/></svg></span>
        <span class="t"><svg><use href="#zoomout"/></svg></span>
        <span class="t"><svg><use href="#zoomfull"/></svg></span>
        <span class="t"><svg><use href="#zoomsel"/></svg></span>
        <span class="t off"><svg><use href="#zoomlayer"/></svg></span>
        <span class="t off"><svg><use href="#zoomone"/></svg></span>
        <span class="t off"><svg><use href="#zoomprev"/></svg></span>
        <span class="t off"><svg><use href="#zoomnext"/></svg></span>
        <span class="t"><svg><use href="#theme"/></svg></span>
        <span class="t"><svg><use href="#tile"/></svg></span>
        <span class="t"><svg><use href="#bookmark"/></svg></span>
        <span class="t"><svg><use href="#bookmarks"/></svg></span>
        <span class="t"><svg><use href="#clock"/></svg></span>
        <span class="t"><svg><use href="#refresh"/></svg></span>
        <span class="handle"></span>
        <span class="t off"><svg><use href="#info"/></svg></span>
        <span class="t off"><svg><use href="#tablei"/></svg></span>
        <span class="t off"><svg><use href="#abacus"/></svg></span>
        <span class="t on"><svg><use href="#gear"/></svg></span>
        <span class="t"><svg><use href="#sigma"/></svg></span>
        <span class="t"><svg><use href="#ruler"/></svg></span><span class="caret"></span>
        <span class="t"><svg><use href="#tip"/></svg></span>
        <span class="t off"><svg><use href="#gearplay"/></svg></span><span class="caret off"></span>
        <span class="t"><svg><use href="#tbox"/></svg></span><span class="caret"></span>
        <span class="handle w-13"></span>
        <span class="t off"><svg><use href="#selbox"/></svg></span><span class="caret off"></span>
        <span class="t off"><svg><use href="#form"/></svg></span><span class="caret off"></span>
        <span class="t"><svg><use href="#deselect"/></svg></span><span class="caret c-10"></span>
        <span class="t"><svg><use href="#selpin"/></svg></span>
    </div>

    <div class="toolbar row-b">
        <span class="handle w-start"></span>
        <span class="t"><svg><use href="#layers"/></svg></span>
        <span class="t"><svg><use href="#gpkgb"/></svg></span>
        <span class="t"><svg><use href="#vlinestar"/></svg></span>
        <span class="t"><svg><use href="#featherstar"/></svg></span>
        <span class="t"><svg><use href="#chip"/></svg></span>
        <span class="sep"></span>
        <span class="t"><svg><use href="#meshstar"/></svg></span>
        <span class="sep"></span>
        <span class="handle"></span>
        <span class="t off"><svg><use href="#pencils"/></svg></span>
        <span class="t off"><svg><use href="#pencil"/></svg></span>
        <span class="t off"><svg><use href="#savepen"/></svg></span>
        <span class="t off"><svg><use href="#ptsstar"/></svg></span>
        <span class="t off"><svg><use href="#tools"/></svg></span><span class="caret off"></span>
        <span class="t off"><svg><use href="#attr"/></svg></span>
        <span class="t off"><svg><use href="#trash"/></svg></span>
        <span class="t off"><svg><use href="#cut"/></svg></span>
        <span class="t off"><svg><use href="#copy"/></svg></span>
        <span class="t off"><svg><use href="#paste"/></svg></span>
        <span class="t off"><svg><use href="#undo"/></svg></span>
        <span class="t off"><svg><use href="#redo"/></svg></span>
        <span class="handle w-14"></span>
        <span class="t off"><svg><use href="#abgrey"/></svg></span>
        <span class="t off"><svg><use href="#diagram"/></svg></span>
        <span class="sep"></span>
        <span class="t"><svg><use href="#abpin"/></svg></span>
        <span class="t"><svg><use href="#abcred"/></svg></span>
        <span class="sep"></span>
        <span class="t off"><svg><use href="#abbad"/></svg></span>
        <span class="t off"><svg><use href="#abeye"/></svg></span>
        <span class="t off"><svg><use href="#abmove"/></svg></span>
        <span class="t off"><svg><use href="#abrot"/></svg></span>
        <span class="t off"><svg><use href="#abedit"/></svg></span>
        <span class="handle"></span>
        <span class="t"><svg><use href="#db"/></svg></span>
        <span class="handle"></span>
        <span class="t"><svg><use href="#globeplus"/></svg></span>
        <span class="t"><svg><use href="#globeq"/></svg></span>
        <span class="t"><svg><use href="#globebin"/></svg></span>
        <span class="handle"></span>
        <span class="t"><svg><use href="#python"/></svg></span>
        <span class="handle"></span>
        <span class="t"><svg><use href="#help"/></svg></span>
        <span class="handle"></span>
    </div>

    <div class="toolbar row-c">
        <span class="handle w-start"></span>
        <span class="t off"><svg><use href="#dotpath"/></svg></span>
        <span class="t off"><svg><use href="#square-ruler"/></svg></span>
        <span class="t off"><svg><use href="#ptsarrow"/></svg></span><span class="caret off"></span>
        <span class="t off"><svg><use href="#blobrot"/></svg></span>
        <span class="t off"><svg><use href="#hexring"/></svg></span>
        <span class="t off"><svg><use href="#ringstar"/></svg></span>
        <span class="t off"><svg><use href="#twostar"/></svg></span>
        <span class="t off"><svg><use href="#ringstar"/></svg></span>
        <span class="t off"><svg><use href="#ringx"/></svg></span>
        <span class="t off"><svg><use href="#twox"/></svg></span>
        <span class="t off"><svg><use href="#reshape"/></svg></span>
        <span class="t off"><svg><use href="#offset"/></svg></span>
        <span class="t off"><svg><use href="#vrot"/></svg></span>
        <span class="t off"><svg><use href="#split"/></svg></span>
        <span class="t off"><svg><use href="#scissor"/></svg></span>
        <span class="t off"><svg><use href="#scissor"/></svg></span>
        <span class="t off"><svg><use href="#scissor2"/></svg></span>
        <span class="t off"><svg><use href="#fillring"/></svg></span>
        <span class="t off"><svg><use href="#rotpoint"/></svg></span><span class="caret off"></span>
        <span class="handle w-14"></span>
        <span class="t off"><svg><use href="#peak"/></svg></span>
        <span class="t off"><svg><use href="#peakarrow"/></svg></span>
        <span class="t off"><svg><use href="#peak"/></svg></span>
        <span class="t off"><svg><use href="#peakarrow"/></svg></span>
        <span class="t off"><svg><use href="#sunup"/></svg></span>
        <span class="t off"><svg><use href="#sundown"/></svg></span>
        <span class="t off"><svg><use href="#contup"/></svg></span>
        <span class="t off"><svg><use href="#contdown"/></svg></span>
        <span class="t off"><svg><use href="#gammaup"/></svg></span>
        <span class="t off"><svg><use href="#gammadown"/></svg></span>
    </div>

    <div class="toolbar row-d">
        <span class="handle w-start w-13"></span>
        <span class="t off"><svg><use href="#curve"/></svg></span><span class="caret off c-10"></span>
        <span class="t off"><svg><use href="#circ"/></svg></span><span class="caret off"></span>
        <span class="t off"><svg><use href="#ell"/></svg></span><span class="caret off"></span>
        <span class="t off"><svg><use href="#rectg"/></svg></span><span class="caret off"></span>
        <span class="t off"><svg><use href="#hexg"/></svg></span><span class="caret off"></span>
        <span class="handle w-14"></span>
        <span class="t"><svg><use href="#magnet"/></svg></span>
        <span class="t off w-34"><svg><use href="#snapadv"/></svg></span>
        <span class="t on off-on"><svg><use href="#gridpts"/></svg></span>
        <span class="spin tol">12<span class="spin-btns off"><i class="up"></i><i class="down"></i></span></span>
        <span class="combo-off">px<i class="down"></i></span>
        <span class="t"><svg><use href="#ytrace"/></svg></span>
        <span class="t"><svg><use href="#trace"/></svg></span>
        <span class="t off"><svg><use href="#xcross"/></svg></span>
        <span class="t off"><svg><use href="#xmark"/></svg></span><span class="caret off"></span>
        <span class="t off"><svg><use href="#nodes"/></svg></span>
    </div>

    <main class="workspace">
        <aside class="vtoolbar">
            <span class="vhandle"></span>
            <span class="vt"><svg><use href="#vlineplus"/></svg></span>
            <span class="vt"><svg><use href="#raster"/></svg></span>
            <span class="vt"><svg><use href="#mesh"/></svg></span>
            <span class="vt"><svg><use href="#comma"/></svg></span>
            <span class="vt"><svg><use href="#featherplus"/></svg></span>
            <span class="vt"><svg><use href="#meshplus"/></svg></span>
            <span class="vt more"><svg><use href="#elephantplus"/></svg></span>
            <span class="vt more"><svg><use href="#globeplus"/></svg></span>
            <span class="vt"><svg><use href="#globedarkplus"/></svg></span>
            <span class="vt more"><svg><use href="#globevplus"/></svg></span>
            <span class="vt more"><svg><use href="#vstaryellow"/></svg></span>
        </aside>

        <section class="left-dock">
            <div class="dock nav-dock">
                <div class="dock-title">Navegador
                    <span class="dock-btns"><svg><use href="#float"/></svg><svg><use href="#close"/></svg></span>
                </div>
                <div class="dock-tools">
                    <svg><use href="#ds-new"/></svg>
                    <svg><use href="#refresh"/></svg>
                    <svg><use href="#ds-filter"/></svg>
                    <svg><use href="#ds-collapse"/></svg>
                    <svg><use href="#ds-info"/></svg>
                </div>
                <ul class="tree nav-tree">
                    <li><i class="leaf"></i><svg><use href="#star"/></svg>Favoritos</li>
                    <li><i class="arrow"></i><svg class="pale"><use href="#bookmarks"/></svg>Favoritos Espaciais</li>
                    <li><i class="arrow"></i><svg><use href="#home"/></svg>Início</li>
                    <li><i class="arrow"></i><svg><use href="#folder"/></svg>/</li>
                    <li><i class="leaf"></i><svg><use href="#gpkg"/></svg>GeoPackage</li>
                    <li><i class="leaf"></i><svg><use href="#feather"/></svg>SpatiaLite</li>
                    <li><i class="leaf"></i><svg><use href="#elephant"/></svg>PostGIS</li>
                    <li><i class="leaf"></i><svg><use href="#mssql"/></svg>MSSQL</li>
                    <li><i class="leaf"></i><svg><use href="#db2"/></svg>DB2</li>
                    <li><i class="leaf"></i><svg><use href="#globeland"/></svg>WMS/WMTS</li>
                    <li><i class="leaf"></i><svg><use href="#grid4"/></svg>Vector Tiles</li>
                    <li><i class="arrow"></i><svg><use href="#xyz"/></svg>XYZ Tiles</li>
                    <li><i class="leaf"></i><svg><use href="#globedark"/></svg>WCS</li>
                    <li><i class="leaf"></i><svg><use href="#globev"/></svg>WFS / OGC API - Features</li>
                    <li><i class="leaf"></i><svg><use href="#globe"/></svg>OWS</li>
                    <li><i class="leaf"></i><svg><use href="#globeland"/></svg>Servidor de mapa do ArcGIS</li>
                    <li><i class="leaf"></i><svg><use href="#geonode"/></svg>GeoNode</li>
                    <li><i class="leaf"></i><svg><use href="#globeland"/></svg>Servidor de feição do ArcGIS</li>
                </ul>
            </div>
            <div class="dock-split"></div>
            <div class="dock layers-dock">
                <div class="dock-title">Camadas
                    <span class="dock-btns"><svg><use href="#float"/></svg><svg><use href="#close"/></svg></span>
                </div>
                <div class="dock-tools">
                    <svg><use href="#ds-brush"/></svg>
                    <svg><use href="#ds-group"/></svg>
                    <svg><use href="#ds-eye"/></svg>
                    <svg><use href="#ds-filter"/></svg>
                    <svg class="pale"><use href="#ds-expr"/></svg>
                    <i class="caret-sm"></i>
                    <svg><use href="#ds-expand"/></svg>
                    <svg><use href="#ds-collapse"/></svg>
                    <svg><use href="#ds-remove"/></svg>
                </div>
                <div class="layers-box">
                    <ul class="layer-list">
                        <li class="layer-off"><i class="check"></i>rio_claro_sirgas2000_utm23s</li>
                        <li><i class="check yes"></i>vetor_linhas_sirgas2000_utm23s</li>
                        <li><i class="check yes"></i>vetor_pontos_sirgas2000_utm23s</li>
                        <li><i class="check yes"></i>vetor_pontos_buffer100m_sirgas2000_utm23s</li>
                        <li><i class="check yes"></i>vetor_poligonos_sirgas2000_utm23s</li>
                        <li><i class="check yes"></i>srtm_rio_claro_unesp_sirgas2000_utm23s</li>
                        <li><i class="check yes"></i>Google Satellite</li>
                    </ul>
                    <div class="hscroll">
                        <span class="sb-btn"><i class="tri-left"></i></span>
                        <span class="sb-track"></span>
                        <span class="sb-btn"><i class="tri-right"></i></span>
                    </div>
                </div>
            </div>
        </section>

        <section class="center">
            <h1 class="page-title">Projeção modelo</h1>
            <div class="center-panel">
                <div class="templates">
                    <div class="template-card"><div class="template-thumb"></div></div>
                    <h2 class="template-name">Novo Projeto Vazio</h2>
                </div>
            </div>
        </section>

        <section class="right-dock">
            <div class="dock-title">Caixa de Ferramentas de processamento
                <span class="dock-btns"><svg><use href="#float"/></svg><svg><use href="#close"/></svg></span>
            </div>
            <div class="dock-tools">
                <svg><use href="#ds-algo"/></svg>
                <svg><use href="#ds-pyc"/></svg>
                <svg class="pale"><use href="#clock"/></svg>
                <svg class="pale"><use href="#ds-doc"/></svg>
                <span class="tool-sep"></span>
                <svg class="pale"><use href="#ds-edit"/></svg>
                <span class="tool-sep"></span>
                <svg><use href="#ds-wrench"/></svg>
            </div>
            <div class="search-box"><svg><use href="#search"/></svg>Buscar...</div>
            <ul class="tree proc-tree">
                <li><i class="arrow"></i><svg class="pale"><use href="#clock"/></svg>Usado recentemente</li>
                <li><i class="arrow"></i><svg><use href="#qgis"/></svg>Análise de dados Raster</li>
                <li><i class="arrow"></i><svg><use href="#qgis"/></svg>Análise de rede</li>
                <li><i class="arrow"></i><svg><use href="#qgis"/></svg>Análise vetorial</li>
                <li><i class="arrow"></i><svg><use href="#qgis"/></svg>Banco de dados</li>
                <li><i class="arrow"></i><svg><use href="#qgis"/></svg>Cartografia</li>
                <li><i class="arrow"></i><svg><use href="#qgis"/></svg>Criação de raster</li>
                <li><i class="arrow"></i><svg><use href="#qgis"/></svg>Criação de vetor</li>
                <li><i class="arrow"></i><svg><use href="#qgis"/></svg>Ferramentas de arquivo</li>
                <li><i class="arrow"></i><svg><use href="#qgis"/></svg>Ferramentas de camada</li>
                <li><i class="arrow"></i><svg><use href="#qgis"/></svg>Ferramentas raster</li>
                <li><i class="arrow"></i><svg><use href="#qgis"/></svg>Geometria do vetor</li>
                <li><i class="arrow"></i><svg><use href="#qgis"/></svg>Interpolar</li>
                <li><i class="arrow"></i><svg><use href="#qgis"/></svg>Malha</li>
                <li><i class="arrow"></i><svg><use href="#qgis"/></svg>Mosaico vetor</li>
                <li><i class="arrow"></i><svg><use href="#qgis"/></svg>Plotar</li>
                <li><i class="arrow"></i><svg><use href="#qgis"/></svg>Raster de análise do terreno</li>
                <li><i class="arrow"></i><svg><use href="#qgis"/></svg>Selecionar vetor</li>
                <li><i class="arrow"></i><svg><use href="#qgis"/></svg>Sobreposição de vetor</li>
                <li><i class="arrow"></i><svg><use href="#qgis"/></svg>Tabela de vetores</li>
                <li><i class="arrow"></i><svg><use href="#qgis"/></svg>Vetor geral</li>
                <li><i class="arrow"></i><svg><use href="#gdal"/></svg>GDAL</li>
                <li><i class="arrow"></i><svg><use href="#grass"/></svg>GRASS</li>
                <li><i class="arrow"></i><svg><use href="#saga"/></svg>SAGA</li>
            </ul>
        </section>
    </main>

    <footer class="statusbar">
        <div class="locator"><svg><use href="#search"/></svg>Escreva para localizar (Ctrl+K)</div>
        <span class="status-msg">Carregando camada vetor_pontos_sirgas2000_utm23s</span>
        <span class="status-label">Coordenada</span>
        <span class="field coord"></span>
        <svg class="st-icon nocoord"><use href="#nocoord"/></svg>
        <span class="status-label">Escala</span>
        <span class="field scale">1:1<span class="scale-btn"><i class="down"></i></span></span>
        <svg class="st-icon lock"><use href="#lock"/></svg>
        <span class="status-label">Lupa</span>
        <span class="field spin zoom">100%<span class="spin-btns"><i class="up"></i><i class="down"></i></span></span>
        <span class="status-label rot">Rotação</span>
        <span class="field spin rotation">0.0 °<span class="spin-btns"><i class="up"></i><i class="down"></i></span></span>
        <i class="check yes render-check"></i>
        <span class="status-label render">Renderizar</span>
        <svg class="st-icon crs"><use href="#crs"/></svg>
        <span class="status-label epsg">EPSG:4326</span>
        <svg class="st-icon chat"><use href="#chat"/></svg>
        <svg class="st-icon plug"><use href="#plug"/></svg>
    </footer>
</div>

<!-- modal dialog -->
<div class="dialog">
    <div class="dialog-title">Manipular camadas indisponíveis<span class="dialog-x">x</span></div>
    <div class="dialog-body">
        <div class="grid-wrap">
            <table class="grid">
                <colgroup><col class="c0"><col class="c1"><col class="c2"><col class="c3"><col class="c4"><col></colgroup>
                <thead>
                    <tr><th></th><th>ome da camad</th><th>Tipo</th><th>Provedor</th><th>Aut. config</th><th>Fonte de dados</th></tr>
                </thead>
                <tbody>
                    <tr><td class="rowhead">1</td><td class="cell-sel">srtm_rio_cla...</td><td>raster</td><td>nenhum</td><td></td><td>../02_dados/03_raster/srtm_rio_claro_unesp_sirgas2000_utm23s.tif</td></tr>
                </tbody>
            </table>
        </div>
        <div class="dialog-btns">
            <button class="btn btn-off">Buscar</button>
            <button class="btn b-auto">Localização automática</button>
            <button class="btn b-apply">Aplicar mudanças</button>
            <button class="btn b-remove"><svg><use href="#trashred"/></svg>Remover camadas indisponíveis</button>
            <button class="btn btn-default">Manter camadas indisponíveis</button>
        </div>
    </div>
</div>

<!-- purple annotations drawn on top of the screenshot -->
<svg class="annot" xmlns="http://www.w3.org/2000/svg" viewBox="0 0 1850 1049">
    <rect x="575.5" y="780.5" width="340" height="37" fill="none" stroke="#800080" stroke-width="3"/>
    <path d="M858 683L690 782M1038 692L886 782" stroke="#800080" stroke-width="3" fill="none"/>
    <path d="M679 792L691 773L701 787zM876 792L888 773L898 787z" fill="#800080" stroke="#800080"/>
</svg>

</body>
</html>
```

FILE: styles.css
```css
/* base */
html, body {
    margin: 0;
    padding: 0;
    width: 1850px;
    height: 1049px;
    overflow: hidden;
}

body {
    background: #efefef;
    color: #1b1b1b;
    font-family: "DejaVu Sans", sans-serif;
    font-size: 13px;
    position: relative;
}

.defs {
    display: none;
}

ul {
    list-style: none;
    margin: 0;
    padding: 0;
}

.app {
    display: flex;
    flex-direction: column;
    height: 1049px;
}

/* title + menu */
.titlebar {
    height: 33px;
    flex: none;
    box-sizing: border-box;
    padding-bottom: 5px;
    background: #333;
    color: #f2f2f2;
    font-family: "Noto Sans", sans-serif;
    font-weight: 600;
    font-size: 12.5px;
    display: flex;
    align-items: center;
    justify-content: center;
    position: relative;
}

.win-btns {
    position: absolute;
    right: 12px;
    top: 0;
    height: 30px;
    display: flex;
    align-items: center;
    gap: 24px;
    font-size: 12px;
}

.menubar {
    height: 21px;
    flex: none;
    display: flex;
    align-items: center;
    padding-left: 1px;
    background: #efefef;
    border-bottom: 1px solid #d9d9d9;
    box-sizing: border-box;
}

.menu {
    padding: 0 7.6px;
    white-space: nowrap;
}

.menu u {
    text-underline-offset: 2px;
    text-decoration-thickness: 1px;
}

/* toolbars */
.toolbar {
    height: 39px;
    flex: none;
    box-sizing: border-box;
    padding-top: 1px;
    display: flex;
    align-items: center;
    background: linear-gradient(#f8f8f8, #ececec);
    border-bottom: 2px solid #c8c8c8;
}

.row-c { height: 40px; }
.row-d { height: 37px; }

.t {
    width: 33px;
    height: 33px;
    flex: none;
    display: flex;
    align-items: center;
    justify-content: center;
    box-sizing: border-box;
}

.t svg {
    width: 24px;
    height: 24px;
}

.t.on {
    background: #dcdcdc;
    border: 1px solid #b4b4b4;
    border-radius: 3px;
    margin: 0;
}

.t.w-34 { width: 31px; }

.off { filter: grayscale(1) opacity(.38); }
.off-on { width: 32px; }

.handle {
    width: 16px;
    height: 20px;
    flex: none;
    display: flex;
    justify-content: center;
}

.handle::before {
    content: "";
    width: 5px;
    height: 100%;
    background-image: radial-gradient(circle, #aaa 45%, transparent 50%);
    background-size: 2.5px 3px;
}

.w-start { width: 11.5px; }
.w-13 { width: 13.5px; }
.w-14 { width: 14px; }

.sep {
    width: 7px;
    height: 27px;
    flex: none;
    background: linear-gradient(#c4c4c4, #c4c4c4) center / 1px 100% no-repeat;
}

.caret {
    width: 13px;
    flex: none;
    display: flex;
}

.caret::before {
    content: "";
    margin-left: 1px;
    border-left: 4px solid transparent;
    border-right: 4px solid transparent;
    border-top: 4px solid #444;
}

.c-10 { width: 10px; }

.spin.tol {
    width: 103px;
    height: 24px;
    margin-left: 1px;
    box-sizing: border-box;
    border: 1px solid #c4c4c4;
    border-radius: 3px;
    background: #eee;
    color: #aaa;
    display: flex;
    align-items: center;
    padding-left: 4px;
    font-size: 14px;
    position: relative;
    flex: none;
}

.combo-off {
    width: 108px;
    height: 24px;
    margin: 0 2px 0 1.5px;
    flex: none;
    box-sizing: border-box;
    border: 1px solid #ccc;
    border-radius: 3px;
    background: #f2f2f2;
    color: #aaa;
    display: flex;
    align-items: center;
    justify-content: space-between;
    padding: 0 8px 0 4px;
    font-size: 14px;
}

.spin-btns {
    position: absolute;
    right: 0;
    top: 0;
    bottom: 0;
    width: 13px;
    display: flex;
    flex-direction: column;
    align-items: center;
    justify-content: center;
    gap: 3px;
    border-left: 1px solid #c4c4c4;
}

.up, .down {
    display: block;
    width: 0;
    height: 0;
    border-left: 4px solid transparent;
    border-right: 4px solid transparent;
}

.up { border-bottom: 4px solid #777; }
.down { border-top: 4px solid #777; }

/* workspace */
.workspace {
    flex: 1;
    min-height: 0;
    display: flex;
}

.vtoolbar {
    width: 51px;
    flex: none;
    box-sizing: border-box;
    background: linear-gradient(90deg, #fafafa, #ececec);
    border-right: 1px solid #bbb;
    display: flex;
    flex-direction: column;
    align-items: flex-start;
    padding-top: 5px;
}

.vhandle {
    width: 18px;
    height: 5px;
    margin: 0 0 3px 17px;
    background-image: radial-gradient(circle, #aaa 45%, transparent 50%);
    background-size: 3px 2.5px;
}

.vt {
    height: 32px;
    display: flex;
    align-items: center;
    padding-left: 7px;
    position: relative;
    flex: none;
}

.vt svg {
    width: 24px;
    height: 24px;
}

.vt.more::after {
    content: "";
    position: absolute;
    left: 37px;
    top: 14px;
    border-left: 4px solid transparent;
    border-right: 4px solid transparent;
    border-top: 4px solid #666;
}

.left-dock {
    width: 381px;
    flex: none;
    display: flex;
    flex-direction: column;
}

.dock {
    display: flex;
    flex-direction: column;
}

.nav-dock { height: 444px; }
.layers-dock { flex: 1; min-height: 0; }

.dock-split {
    height: 4px;
    flex: none;
    background-image: radial-gradient(circle, #bbb 40%, transparent 45%);
    background-size: 3px 3px;
    background-position: center;
    background-repeat: no-repeat;
}

.dock-title {
    height: 23px;
    flex: none;
    display: flex;
    align-items: center;
    justify-content: space-between;
    padding: 0 1px 0 4px;
    color: #222;
}

.dock-btns {
    display: flex;
    gap: 1px;
}

.dock-btns svg {
    width: 13px;
    height: 13px;
}

.dock-tools {
    height: 29px;
    flex: none;
    box-sizing: border-box;
    padding: 0 0 3px 8px;
    display: flex;
    align-items: center;
    gap: 7px;
}

.dock-tools svg {
    width: 18px;
    height: 18px;
    flex: none;
}

.pale { filter: grayscale(1) opacity(.55); }

.caret-sm {
    width: 0;
    height: 0;
    margin: 0 -1px 0 -2px;
    border-left: 4px solid transparent;
    border-right: 4px solid transparent;
    border-top: 4px solid #ccc;
}

.tool-sep {
    width: 1px;
    height: 16px;
    background: #ccc;
}

.tree {
    background: #fff;
    border: 1px solid #b8b8b8;
    box-sizing: border-box;
    flex: 1;
    min-height: 0;
}

.tree li {
    height: 19px;
    display: flex;
    align-items: center;
    white-space: nowrap;
}

.tree li svg {
    width: 16px;
    height: 16px;
    margin-right: 6px;
    flex: none;
}

.nav-tree .arrow, .nav-tree .leaf {
    margin-left: 7px;
    margin-right: 12px;
}

.arrow, .leaf {
    width: 4px;
    height: 9px;
    flex: none;
    box-sizing: border-box;
}

.arrow {
    border-left: 4px solid #555;
    border-top: 4px solid transparent;
    border-bottom: 4px solid transparent;
    height: 8px;
}

.layers-box {
    flex: 1;
    min-height: 0;
    background: #fff;
    border: 1px solid #b8b8b8;
    display: flex;
    flex-direction: column;
}

.layer-list {
    flex: 1;
    min-height: 0;
    overflow: hidden;
}

.layer-list li {
    height: 17px;
    display: flex;
    align-items: center;
    padding-left: 23px;
    font-weight: bold;
    white-space: nowrap;
    color: #111;
}

.layer-off {
    font-style: italic;
    color: #888 !important;
}

.check {
    width: 14px;
    height: 14px;
    flex: none;
    box-sizing: border-box;
    border: 1px solid #c0c0c0;
    background: #fff;
    margin-right: 6px;
    position: relative;
}

.check.yes::after {
    content: "";
    position: absolute;
    left: 4px;
    top: 1px;
    width: 3px;
    height: 8px;
    border: solid #111;
    border-width: 0 2px 2px 0;
    transform: rotate(38deg);
}

.hscroll {
    height: 14px;
    flex: none;
    display: flex;
    border-top: 1px solid #c0c0c0;
    background: #f4f4f4;
}

.sb-btn {
    width: 13px;
    flex: none;
    display: flex;
    align-items: center;
    justify-content: center;
    border-right: 1px solid #c4c4c4;
}

.sb-btn:last-child {
    width: 17px;
    border-right: 0;
    border-left: 1px solid #c4c4c4;
}

.sb-track {
    flex: 1;
    margin-right: 4px;
    border-right: 1px solid #c4c4c4;
    background: linear-gradient(#fbfbfb, #efefef);
}

.tri-left, .tri-right {
    width: 0;
    height: 0;
    border-top: 4px solid transparent;
    border-bottom: 4px solid transparent;
}

.tri-left { border-right: 4px solid #444; }
.tri-right { border-left: 4px solid #444; }

/* center */
.center {
    width: 1014px;
    margin-left: 10px;
    flex: none;
    display: flex;
    flex-direction: column;
}

.page-title {
    height: 43px;
    flex: none;
    margin: 0;
    padding: 1px 0 0 11px;
    display: flex;
    align-items: center;
    box-sizing: border-box;
    font-size: 22.95px;
    font-weight: bold;
    color: #111;
}

.center-panel {
    flex: 1;
    min-height: 0;
    background: #fff;
    border: 1px solid #b8b8b8;
    box-sizing: border-box;
    padding: 5px 4px 0 7px;
}

.templates {
    height: 187px;
    background: #eee;
    border-radius: 10px;
    padding: 5px 0 0 2px;
    display: flex;
    gap: 20px;
}

.template-card {
    width: 250px;
    height: 177px;
    background: #fff;
    border-radius: 10px;
    box-sizing: border-box;
    padding: 20px 0 0 21px;
}

.template-thumb {
    height: 136px;
    border: 1px dashed #999;
    box-sizing: border-box;
}

.template-name {
    margin: 10px 0 0;
    font-size: 16px;
    font-weight: bold;
}

/* right dock */
.right-dock {
    width: 387px;
    margin-left: 7px;
    flex: none;
    display: flex;
    flex-direction: column;
    box-sizing: border-box;
    padding-left: 1px;
}

.right-dock .dock-title { padding-left: 3px; padding-right: 0; }
.right-dock .dock-tools { gap: 7px; padding-left: 7px; }

.search-box {
    height: 25px;
    flex: none;
    box-sizing: border-box;
    background: #fff;
    border: 1px solid #c4c4c4;
    border-radius: 3px;
    display: flex;
    align-items: center;
    color: #777;
    padding-left: 8px;
}

.search-box svg, .locator svg {
    width: 14px;
    height: 14px;
    margin-right: 7px;
}

.proc-tree .arrow {
    margin-left: 8px;
    margin-right: 10px;
}

.proc-tree li svg { margin-right: 6px; }

/* status bar */
.statusbar {
    height: 31px;
    flex: none;
    display: flex;
    align-items: center;
    background: #efefef;
    font-size: 11px;
    padding-left: 3px;
}

.locator {
    width: 355px;
    height: 23px;
    flex: none;
    box-sizing: border-box;
    background: #fff;
    border: 1px solid #c4c4c4;
    border-radius: 3px;
    display: flex;
    align-items: center;
    padding-left: 7px;
    color: #777;
    font-size: 13px;
}

.status-msg {
    margin-left: 9px;
    width: 546px;
    flex: none;
    white-space: nowrap;
}

.status-label {
    flex: none;
    white-space: nowrap;
}

.field {
    height: 23px;
    flex: none;
    box-sizing: border-box;
    background: #fff;
    border: 1px solid #c4c4c4;
    border-radius: 3px;
    display: flex;
    align-items: center;
    padding-left: 4px;
    position: relative;
    margin-left: 4px;
}

.coord { width: 124px; }
.scale { width: 97px; }
.zoom { width: 98px; }
.rotation { width: 94px; margin-left: 10px; }

.scale-btn {
    position: absolute;
    right: 0;
    top: 0;
    bottom: 0;
    width: 18px;
    display: flex;
    align-items: center;
    justify-content: center;
    border-left: 1px solid #c4c4c4;
}

.st-icon {
    width: 16px;
    height: 16px;
    flex: none;
}

.nocoord { margin: 0 13px 0 4px; }
.lock { margin: 0 7px 0 10px; }
.rot { margin-left: 9px; }
.render-check { margin: 0 4px 0 7px; }
.crs { margin: 0 2px 0 15px; width: 14px; height: 14px; }
.epsg { margin-right: 23px; }
.chat { width: 18px; height: 18px; margin-right: 13px; }
.plug { width: 20px; height: 20px; }

/* modal */
.dialog {
    position: absolute;
    left: 481px;
    top: 282px;
    width: 920px;
    height: 542px;
    box-sizing: border-box;
    background: #efefef;
    border: 1px solid #888;
    border-top: 0;
    border-radius: 3px 3px 0 0;
    box-shadow: 0 6px 22px rgba(0, 0, 0, .5);
    display: flex;
    flex-direction: column;
}

.dialog-title {
    height: 36px;
    flex: none;
    background: #333;
    color: #f2f2f2;
    border-radius: 3px 3px 0 0;
    font-family: "Noto Sans", sans-serif;
    font-weight: 600;
    font-size: 12.5px;
    display: flex;
    align-items: center;
    justify-content: center;
    position: relative;
}

.dialog-x {
    position: absolute;
    right: 9px;
    top: 9px;
    width: 18px;
    height: 18px;
    border-radius: 50%;
    background: #f08a28;
    color: #fff;
    font-weight: bold;
    font-size: 12px;
    line-height: 16px;
    text-align: center;
}

.dialog-body {
    flex: 1;
    min-height: 0;
    padding: 12px 11px 10px;
    display: flex;
    flex-direction: column;
    font-size: 13px;
}

.grid-wrap {
    flex: 1;
    min-height: 0;
    border: 1px solid #bbb;
    background: linear-gradient(90deg, #f1f1f1 14px, #c8c8c8 14px, #c8c8c8 15px, #fff 15px);
    overflow: hidden;
}

.grid {
    width: 100%;
    border-collapse: collapse;
    table-layout: fixed;
}

.c0 { width: 14px; }
.c1 { width: 100px; }
.c2 { width: 100px; }
.c3 { width: 100px; }
.c4 { width: 75px; }

.grid th {
    height: 20px;
    padding: 0;
    font-weight: normal;
    background: linear-gradient(#fbfbfb, #ececec);
    border-right: 1px solid #c8c8c8;
    border-bottom: 1px solid #bbb;
    white-space: nowrap;
    overflow: hidden;
}

.grid td {
    height: 29px;
    padding: 0 3px;
    background: #fff;
    border-right: 1px solid #c8c8c8;
    border-bottom: 1px solid #c8c8c8;
    white-space: nowrap;
    overflow: hidden;
}

.grid td.rowhead {
    padding: 0;
    text-align: center;
    background: #f1f1f1;
}

.grid td.cell-sel {
    background: linear-gradient(#e4f0f8, #f3f8fb);
    box-shadow: inset 0 0 0 1px #a9c6da;
}

.dialog-btns {
    height: 25px;
    flex: none;
    margin-top: 6px;
    display: flex;
    gap: 6px;
}

.btn {
    height: 25px;
    padding: 0;
    box-sizing: border-box;
    font-family: "DejaVu Sans", sans-serif;
    font-size: 13px;
    color: #1b1b1b;
    background: linear-gradient(#fafafa, #ebebeb);
    border: 1px solid #b4b4b4;
    border-radius: 3px;
    flex: none;
}

.btn-off {
    width: 80px;
    color: #aaa;
    background: #efefef;
    border-color: #cfcfcf;
}

.b-auto { width: 182px; }
.b-apply { width: 145px; }

.b-remove {
    width: 238px;
    display: flex;
    align-items: center;
    padding-left: 5px;
    gap: 2px;
}

.b-remove svg {
    width: 14px;
    height: 14px;
}

.btn-default {
    width: 225px;
    margin-left: 2px;
    background: linear-gradient(#f4f9fc, #dce9f1);
    border-color: #2a78b0;
}

/* annotation overlay */
.annot {
    position: absolute;
    left: 0;
    top: 0;
    width: 1850px;
    height: 1049px;
    pointer-events: none;
}
```
